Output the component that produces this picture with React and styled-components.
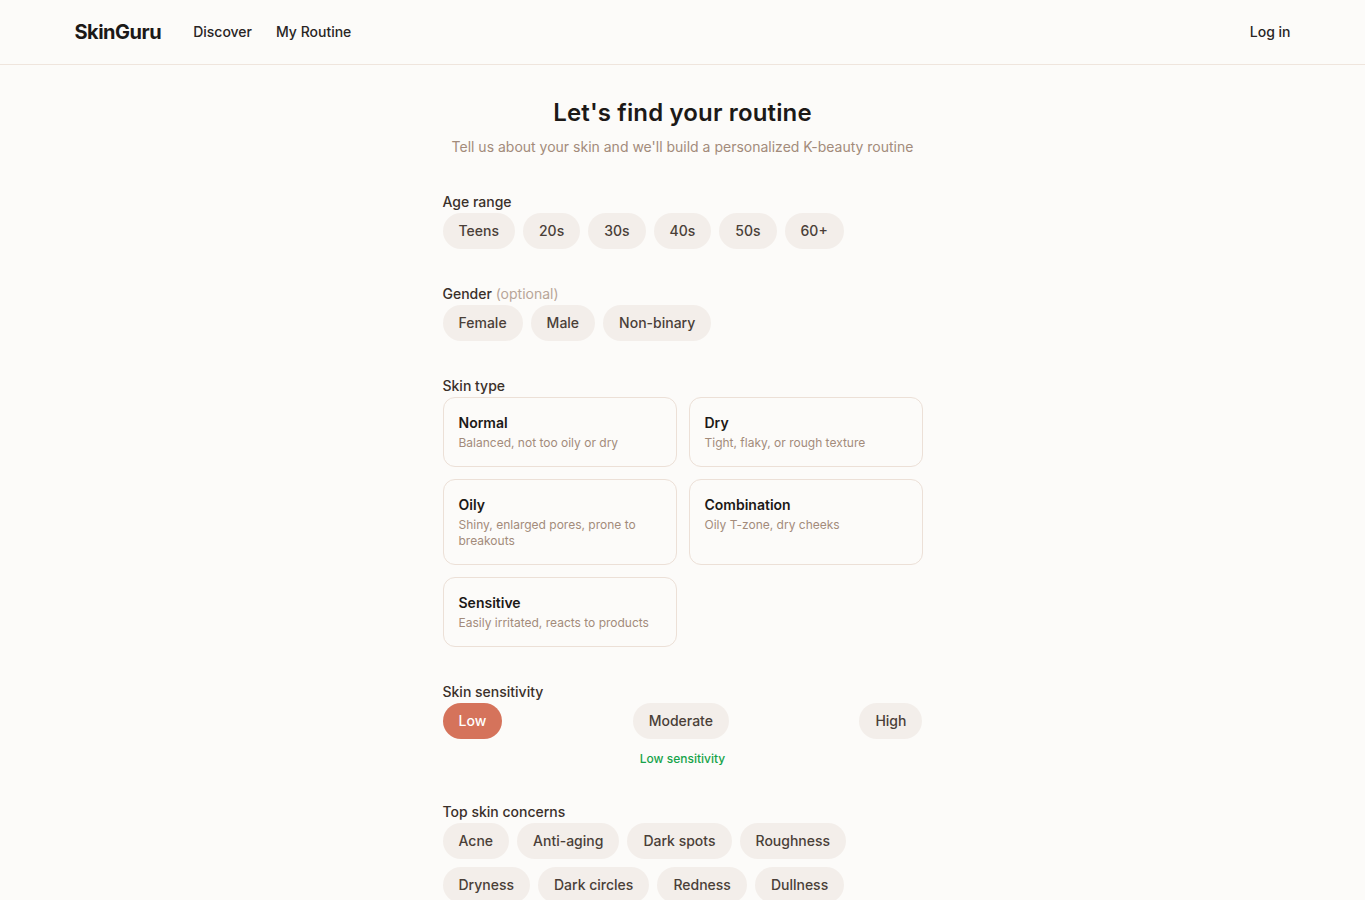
import React, { useState } from "react";
import styled, { createGlobalStyle } from "styled-components";

const GlobalStyle = createGlobalStyle`
  html, body { margin: 0; padding: 0; background: #fcfbf9; }
  body { font-family: Inter, "Noto Sans", sans-serif; color: #1c1917; -webkit-font-smoothing: antialiased; }
  * { box-sizing: border-box; }
`;

const Header = styled.header`
  border-bottom: 1px solid #efe5dd;
  background: #fcfbf9;
`;

const HeaderInner = styled.div`
  max-width: 1280px;
  margin: 0 auto;
  padding: 0 32px 1px;
  height: 64px;
  display: flex;
  align-items: center;
  justify-content: space-between;
`;

const Left = styled.div`
  display: flex;
  align-items: center;
  gap: 32px;
`;

const Logo = styled.span`
  font-size: 20px;
  font-weight: 700;
  letter-spacing: -0.5px;
  color: #1c1917;
`;

const Nav = styled.nav`
  display: flex;
  gap: 24px;
`;

const NavLink = styled.a`
  font-size: 14px;
  font-weight: 500;
  color: #292524;
  text-decoration: none;
`;

const Main = styled.main`
  width: 480px;
  margin: 0 auto;
  padding-top: 32px;
`;

const Title = styled.h1`
  margin: 0;
  text-align: center;
  font-size: 24px;
  line-height: 32px;
  font-weight: 600;
  letter-spacing: 0.15px;
  color: #1c1917;
`;

const Subtitle = styled.p`
  margin: 8px 0 0;
  text-align: center;
  font-size: 14px;
  line-height: 20px;
  color: #a38b7b;
`;

const Section = styled.section`
  margin-top: 35px;
`;

const Label = styled.div`
  font-size: 14px;
  line-height: 20px;
  font-weight: 500;
  color: #3a302a;
  margin-bottom: 1px;
`;

const Optional = styled.span`
  font-weight: 400;
  color: #b8a598;
`;

const PillRow = styled.div`
  display: flex;
  flex-wrap: wrap;
  gap: 8px;
  justify-content: ${(p) => (p.$spread ? "space-between" : "flex-start")};
`;

const Pill = styled.button`
  height: 36px;
  padding: 0 16px;
  border: none;
  border-radius: 999px;
  font-family: inherit;
  font-size: 14px;
  line-height: 20px;
  font-weight: 500;
  cursor: pointer;
  background: ${(p) => (p.$active ? "#d5735b" : "#f3eeea")};
  color: ${(p) => (p.$active ? "#ffffff" : "#4a3f38")};
`;

const CardGrid = styled.div`
  display: grid;
  grid-template-columns: 1fr 1fr;
  gap: 12px;
`;

const Card = styled.button`
  text-align: left;
  padding: 15px;
  border: 1px solid #ece0d7;
  border-radius: 12px;
  background: #fcfbf9;
  font-family: inherit;
  cursor: pointer;
  display: flex;
  flex-direction: column;
  gap: 2px;
  align-items: flex-start;
`;

const CardTitle = styled.span`
  font-size: 14px;
  line-height: 20px;
  font-weight: 600;
  color: #1c1917;
`;

const CardDesc = styled.span`
  font-size: 12px;
  line-height: 16px;
  color: #a38b7b;
`;

const Hint = styled.div`
  margin-top: 12px;
  text-align: center;
  font-size: 12px;
  line-height: 16px;
  font-weight: 500;
  color: #16a34a;
`;

const ages = ["Teens", "20s", "30s", "40s", "50s", "60+"];
const genders = ["Female", "Male", "Non-binary"];
const skinTypes = [
  ["Normal", "Balanced, not too oily or dry"],
  ["Dry", "Tight, flaky, or rough texture"],
  ["Oily", "Shiny, enlarged pores, prone to breakouts"],
  ["Combination", "Oily T-zone, dry cheeks"],
  ["Sensitive", "Easily irritated, reacts to products"],
];
const levels = ["Low", "Moderate", "High"];
const concerns = ["Acne", "Anti-aging", "Dark spots", "Roughness", "Dryness", "Dark circles", "Redness", "Dullness"];

export default function App() {
  const [level, setLevel] = useState("Low");
  return (
    <>
      <GlobalStyle />
      <Header>
        <HeaderInner>
          <Left>
            <Logo>SkinGuru</Logo>
            <Nav>
              <NavLink href="#">Discover</NavLink>
              <NavLink href="#">My Routine</NavLink>
            </Nav>
          </Left>
          <NavLink href="#">Log in</NavLink>
        </HeaderInner>
      </Header>
      <Main>
        <Title>Let's find your routine</Title>
        <Subtitle>Tell us about your skin and we'll build a personalized K-beauty routine</Subtitle>

        <Section>
          <Label>Age range</Label>
          <PillRow>
            {ages.map((a) => (
              <Pill key={a}>{a}</Pill>
            ))}
          </PillRow>
        </Section>

        <Section>
          <Label>
            Gender <Optional>(optional)</Optional>
          </Label>
          <PillRow>
            {genders.map((g) => (
              <Pill key={g}>{g}</Pill>
            ))}
          </PillRow>
        </Section>

        <Section>
          <Label>Skin type</Label>
          <CardGrid>
            {skinTypes.map(([t, d]) => (
              <Card key={t}>
                <CardTitle>{t}</CardTitle>
                <CardDesc>{d}</CardDesc>
              </Card>
            ))}
          </CardGrid>
        </Section>

        <Section>
          <Label>Skin sensitivity</Label>
          <PillRow $spread>
            {levels.map((l) => (
              <Pill key={l} $active={l === level} onClick={() => setLevel(l)}>
                {l}
              </Pill>
            ))}
          </PillRow>
          <Hint>{level} sensitivity</Hint>
        </Section>

        <Section>
          <Label>Top skin concerns</Label>
          <PillRow>
            {concerns.map((c) => (
              <Pill key={c}>{c}</Pill>
            ))}
          </PillRow>
        </Section>
      </Main>
    </>
  );
}
